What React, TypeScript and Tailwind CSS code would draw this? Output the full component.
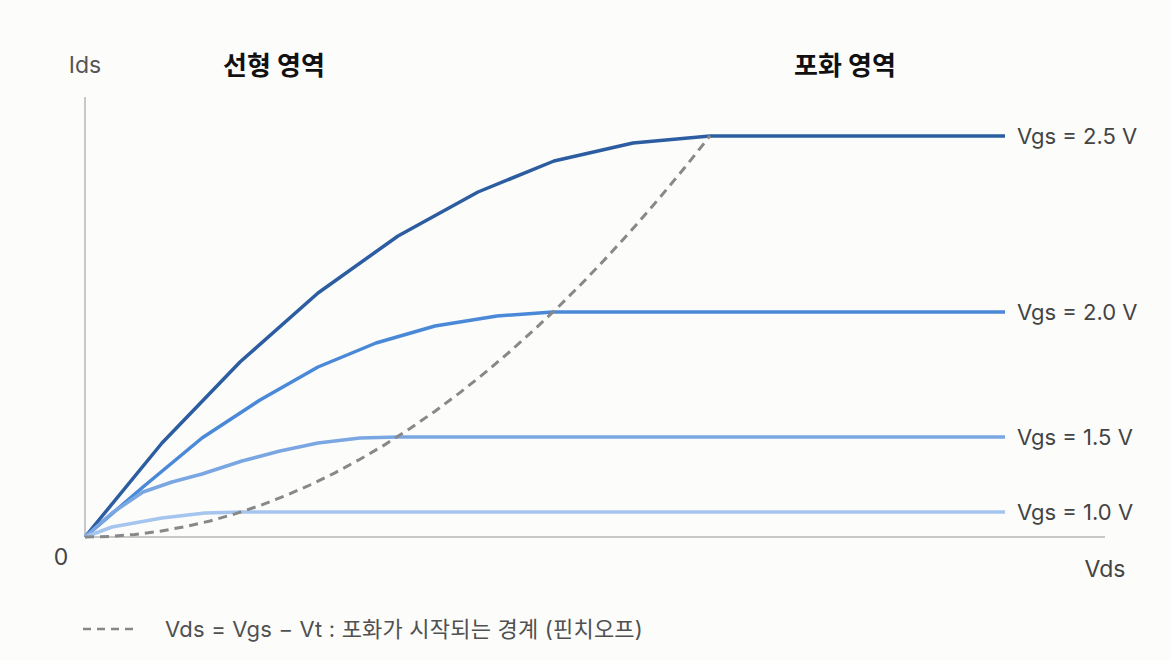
const font = "font-['Inter','Noto_Sans_CJK_KR',sans-serif]"

// curve points are in page pixels (origin at 85,537)
const curves = [
  {
    label: "Vgs = 2.5 V",
    color: "#2d5da1",
    y: 136,
    pts: "85,537 162,443 240,362 318,293 398,236 478,192 554,161 633,143 710,136 1005,136",
  },
  {
    label: "Vgs = 2.0 V",
    color: "#4a88d8",
    y: 312,
    pts: "85,537 143,487 202,438 260,400 318,367 376,343 435,326 497,316 553,312 1005,312",
  },
  {
    label: "Vgs = 1.5 V",
    color: "#7aa7e2",
    y: 437,
    pts: "85,537 112,513 143,492 172,482 202,474 242,461 280,451 318,443 360,438 398,437 1005,437",
  },
  {
    label: "Vgs = 1.0 V",
    color: "#a6c5ee",
    y: 512,
    pts: "85,537 112,527 162,518 205,513 242,512 1005,512",
  },
]

// Vds = Vgs - Vt boundary, parabola through the knee points
const pinch = Array.from({ length: 26 }, (_, i) => {
  const x = 85 + (625 * i) / 25
  const y = 537 - 0.001027 * (x - 85) * (x - 85)
  return `${x.toFixed(1)},${y.toFixed(1)}`
}).join(" ")

export default function App() {
  return (
    <div className={`w-[1170px] h-[660px] bg-[#fcfcfb] flex flex-col ${font}`}>
      <svg width="1170" height="600" viewBox="0 0 1170 600" className="block">
        <text x="85" y="73" textAnchor="middle" fontSize="23" fill="#555555">Ids</text>
        <text x="274" y="75" textAnchor="middle" fontSize="26" fontWeight="700" fill="#111111">선형 영역</text>
        <text x="845" y="75" textAnchor="middle" fontSize="26" fontWeight="700" fill="#111111">포화 영역</text>

        <line x1="85" y1="97" x2="85" y2="537" stroke="#c8c8c8" strokeWidth="2" />
        <line x1="85" y1="537" x2="1105" y2="537" stroke="#c8c8c8" strokeWidth="2" />

        {curves.map((c) => (
          <polyline key={c.label} points={c.pts} fill="none" stroke={c.color} strokeWidth="3.5" strokeLinejoin="round" />
        ))}
        <polyline points={pinch} fill="none" stroke="#888888" strokeWidth="3" strokeDasharray="9 6" />

        {curves.map((c) => (
          <text key={c.label + "t"} x="1017" y={c.y + 8} fontSize="22" fill="#444444">{c.label}</text>
        ))}

        <text x="61" y="565" textAnchor="middle" fontSize="23" fill="#444444">0</text>
        <text x="1105" y="577" textAnchor="middle" fontSize="23" fill="#444444">Vds</text>
      </svg>
      <div className="flex items-center gap-[28px] pl-[83px] mt-[18px]">
        <svg width="54" height="4" className="block">
          <line x1="0" y1="2" x2="54" y2="2" stroke="#888888" strokeWidth="2.5" strokeDasharray="8 6" />
        </svg>
        <p className="text-[22px] text-[#505050] leading-none tracking-[0.2px]">Vds = Vgs − Vt : 포화가 시작되는 경계 (핀치오프)</p>
      </div>
    </div>
  )
}
